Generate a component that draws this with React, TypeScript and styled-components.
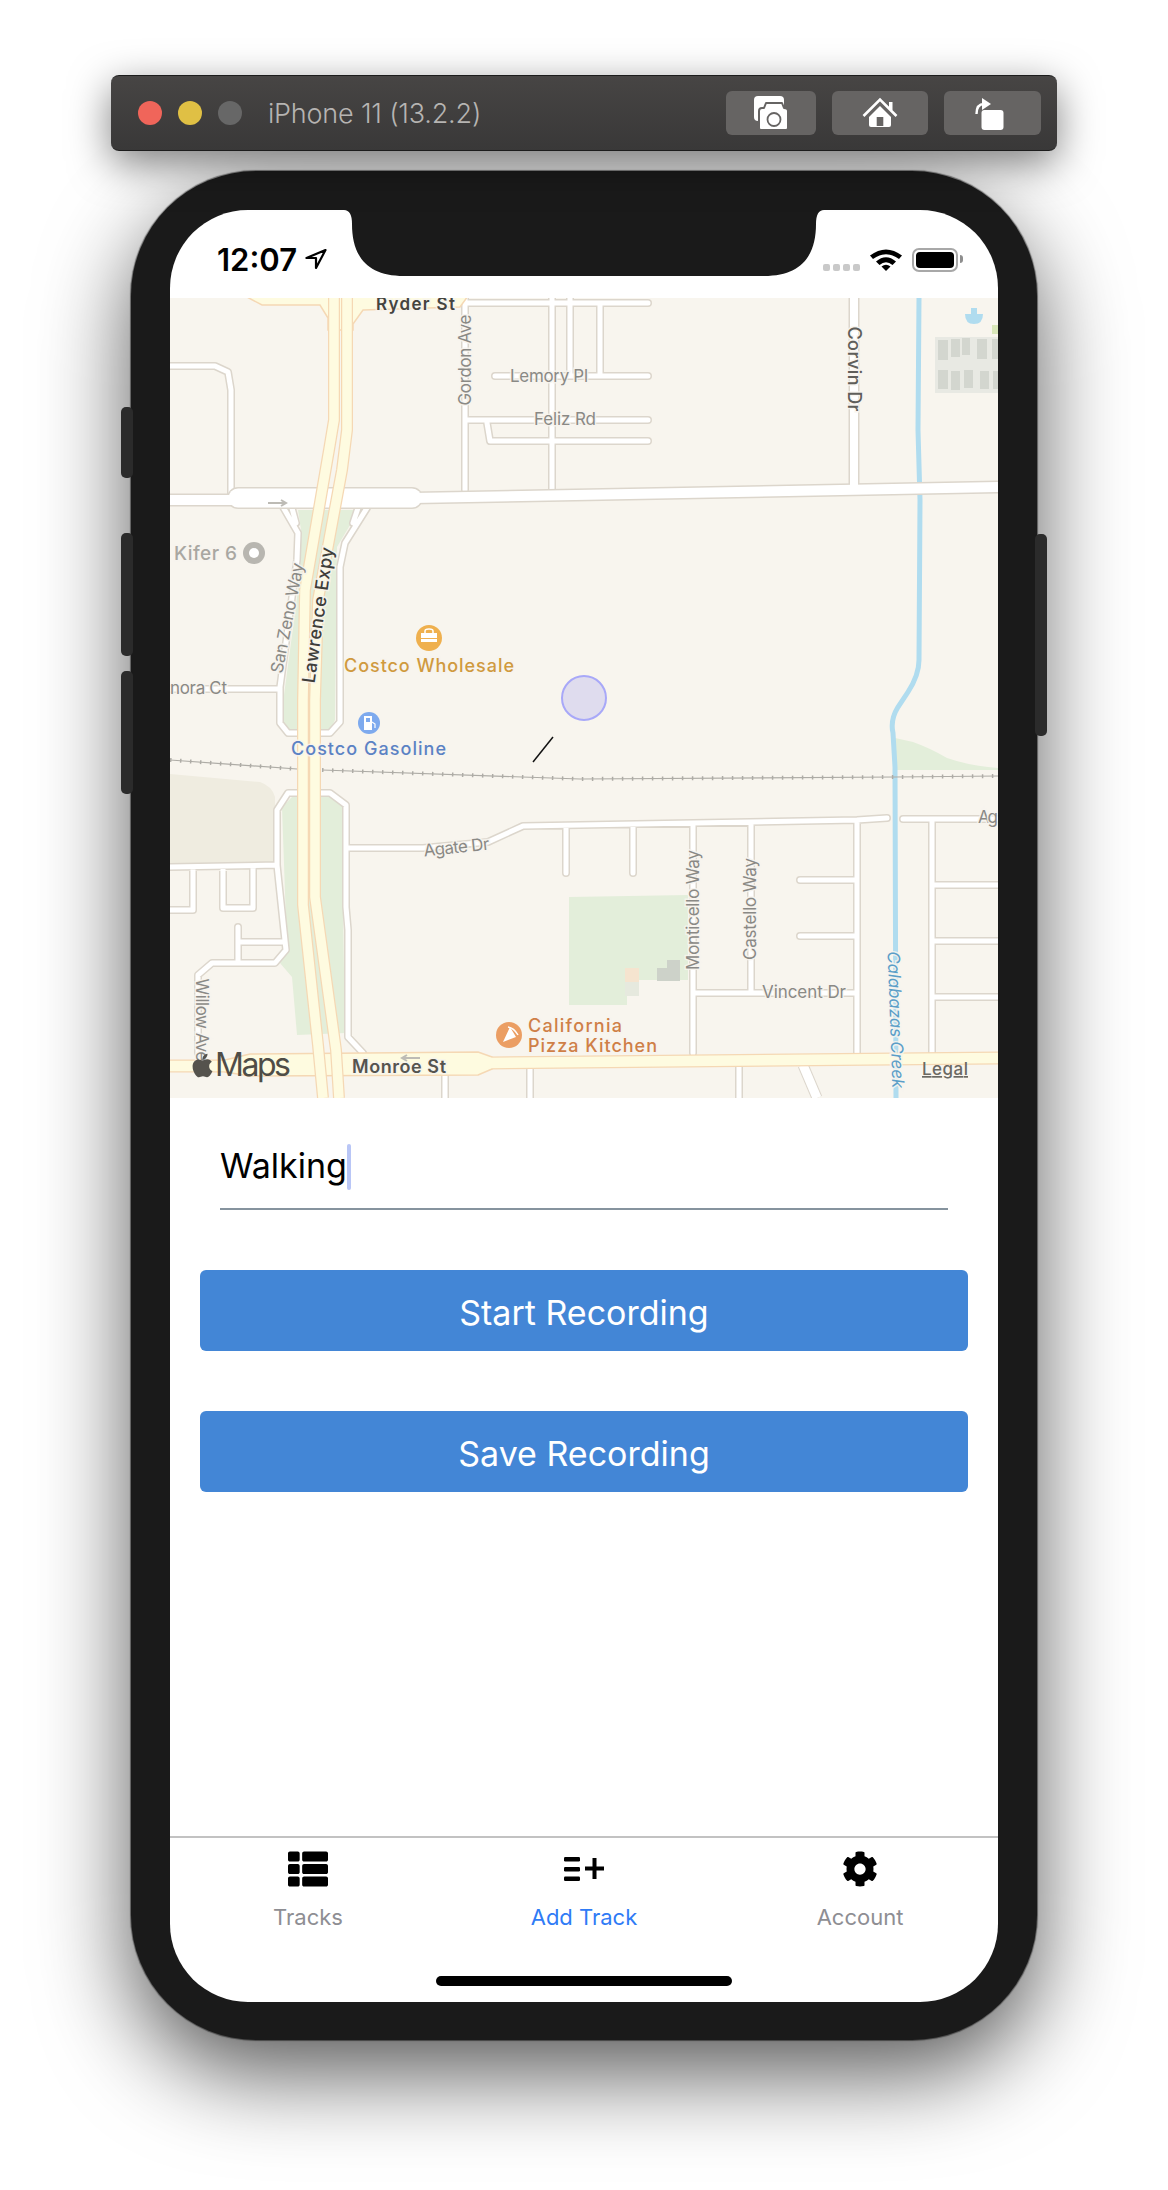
import React from 'react';
import styled, { createGlobalStyle } from 'styled-components';
import { FaApple, FaCog, FaThList } from 'react-icons/fa';

const GlobalStyle = createGlobalStyle`
  html, body {
    margin: 0;
    padding: 0;
    background: #fff;
  }
`;

const uiFont = `Inter, "Noto Sans", "Liberation Sans", sans-serif`;

const Page = styled.div`
  width: 1168px;
  height: 2190px;
  padding: 75px 0 0 111px;
  box-sizing: border-box;
  overflow: hidden;
  font-family: ${uiFont};
`;

const Toolbar = styled.header`
  width: 946px;
  height: 76px;
  box-sizing: border-box;
  padding: 0 16px 0 27px;
  display: flex;
  align-items: center;
  gap: 16px;
  border-radius: 8px;
  background: linear-gradient(#474544, #393838);
  border-top: 1px solid #1c1c1c;
  border-bottom: 1px solid #1c1c1c;
  box-shadow: 0 12px 40px rgba(0, 0, 0, 0.5);
  position: relative;
  z-index: 1;
`;

const Light = styled.span<{ $color: string }>`
  width: 24px;
  height: 24px;
  border-radius: 50%;
  background: ${(p) => p.$color};
`;

const DeviceName = styled.span`
  margin-left: 10px;
  flex: 1;
  font-size: 27px;
  font-weight: 300;
  letter-spacing: -0.2px;
  color: #b6b4b2;
`;

const ToolButton = styled.button<{ $width: number }>`
  width: ${(p) => p.$width}px;
  height: 44px;
  padding: 0;
  border: 0;
  border-radius: 6px;
  background: #666463;
  display: flex;
  align-items: center;
  justify-content: center;
`;

const Phone = styled.div`
  position: relative;
  width: 906px;
  height: 1869px;
  margin: 20px 0 0 20px;
  padding: 39px;
  box-sizing: border-box;
  border-radius: 125px;
  background: #1a1a1a;
  box-shadow: 0 34px 90px rgba(0, 0, 0, 0.65), 0 0 1px 1px #8a8a8a;
`;

const SideButton = styled.span<{ $side: 'left' | 'right'; $top: number; $height: number }>`
  position: absolute;
  ${(p) => p.$side}: -10px;
  top: ${(p) => p.$top}px;
  width: 12px;
  height: ${(p) => p.$height}px;
  border-radius: 5px;
  background: #2b2b2b;
`;

const Screen = styled.div`
  position: relative;
  width: 828px;
  height: 1792px;
  overflow: hidden;
  border-radius: 78px;
  background: #fff;
  display: flex;
  flex-direction: column;
`;

const Notch = styled.svg`
  position: absolute;
  top: 0;
  left: 174px;
`;

const StatusBar = styled.div`
  height: 88px;
  flex: none;
  box-sizing: border-box;
  padding: 34px 40px 0 47px;
  display: flex;
  justify-content: space-between;
`;

const StatusLeft = styled.div`
  display: flex;
  align-items: flex-start;
  gap: 8px;
`;

const Clock = styled.span`
  font-size: 31px;
  line-height: 32px;
  font-weight: 600;
  color: #000;
`;

const LocationArrow = styled.svg`
  margin-top: 5px;
`;

const StatusRight = styled.div`
  display: flex;
  align-items: flex-start;
  padding-top: 4px;
`;

const SignalDots = styled.div`
  display: flex;
  gap: 3px;
  margin: 16px 10px 0 0;
`;

const SignalDot = styled.span`
  width: 7px;
  height: 7px;
  border-radius: 2px;
  background: #c9c9c9;
`;

const Battery = styled.div`
  position: relative;
  width: 46px;
  height: 24px;
  margin-left: 10px;
  box-sizing: border-box;
  padding: 2px;
  border: 2px solid #a8a8a8;
  border-radius: 7px;
  &::before {
    content: '';
    display: block;
    width: 100%;
    height: 100%;
    border-radius: 4px;
    background: #000;
  }
  &::after {
    content: '';
    position: absolute;
    right: -7px;
    top: 5px;
    width: 3px;
    height: 8px;
    border-radius: 0 3px 3px 0;
    background: #8e8e8e;
  }
`;

const MapCanvas = styled.svg`
  display: block;
  flex: none;
  background: #f8f5ee;
`;

const MapLabel = styled.text<{ $tone: string; $weight?: number; $size?: number; $italic?: boolean }>`
  font-family: ${uiFont};
  font-size: ${(p) => p.$size || 17}px;
  font-weight: ${(p) => p.$weight || 400};
  font-style: ${(p) => (p.$italic ? 'italic' : 'normal')};
  fill: ${(p) => p.$tone};
  stroke: rgba(247, 244, 238, 0.85);
  stroke-width: 3px;
  paint-order: stroke;
`;

const MapsWord = styled.text`
  font-family: ${uiFont};
  font-size: 32px;
  font-weight: 400;
  letter-spacing: -1px;
  fill: #4f4d47;
`;

const LegalLink = styled.text`
  font-family: ${uiFont};
  font-size: 17px;
  font-weight: 500;
  fill: #6a6862;
  text-decoration: underline;
`;

const Form = styled.div`
  flex: 1;
  padding: 0 30px;
  display: flex;
  flex-direction: column;
`;

const NameField = styled.div`
  height: 112px;
  margin: 0 20px;
  box-sizing: border-box;
  padding-top: 46px;
  display: flex;
  align-items: flex-start;
  border-bottom: 2px solid #86939e;
`;

const NameValue = styled.span`
  font-size: 34px;
  line-height: 44px;
  color: #000;
`;

const Caret = styled.span`
  width: 4px;
  height: 46px;
  margin-top: 0;
  border-radius: 2px;
  background: #b9c6f6;
`;

const ActionButton = styled.button`
  height: 81px;
  margin-top: 60px;
  padding: 3px 0 0;
  border: 0;
  border-radius: 6px;
  background: #4386d6;
  color: #fff;
  font-family: ${uiFont};
  font-size: 34px;
  font-weight: 400;
`;

const TabBar = styled.nav`
  height: 166px;
  flex: none;
  box-sizing: border-box;
  border-top: 2px solid #c2c2c2;
  display: grid;
  grid-template-columns: repeat(3, 276px);
  position: relative;
`;

const TabItem = styled.div<{ $active?: boolean }>`
  display: flex;
  flex-direction: column;
  align-items: center;
  padding-top: 12px;
  color: ${(p) => (p.$active ? '#2f7bf6' : '#8e8e93')};
  font-size: 22px;
`;

const TabIcon = styled.div`
  height: 38px;
  display: flex;
  align-items: center;
  justify-content: center;
  color: #000;
`;

const TabLabel = styled.span`
  margin-top: 16px;
  line-height: 26px;
`;

const HomeBar = styled.span`
  position: absolute;
  left: 266px;
  top: 138px;
  width: 296px;
  height: 10px;
  border-radius: 5px;
  background: #000;
`;

const minorRoads = [
  'M170 366H215L228 372L231 390V497',
  'M465 298V490',
  'M552 298V490',
  'M570 298V376',
  'M600 304V376',
  'M465 303H648',
  'M495 376H648',
  'M465 420H648',
  'M487 423L490 441H648',
  'M283 507L298 533L297 560L280 687V723L288 733H330L340 722V567L345 543L367 508',
  'M292 508L296 523',
  'M358 508L353 523',
  'M170 689H280',
  'M277 865V810L288 793H330L346 805V907L348 930V1037L363 1053',
  'M277 865L286 950L275 963H212L198 975V1053',
  'M238 927V963',
  'M238 942H285',
  'M170 867L277 865',
  'M170 910H193V867',
  'M223 867V908H253V867',
  'M347 848H423L488 842L523 826L857 820L887 818',
  'M903 819H998',
  'M566 826V873',
  'M633 826V873',
  'M693 825V1053',
  'M751 824V992',
  'M693 993H857',
  'M857 820V1053',
  'M800 880H857',
  'M800 936H857',
  'M932 819V1053',
  'M932 885H998',
  'M932 941H998',
  'M932 997H998',
  'M445 1066V1098',
  'M530 1066V1098',
  'M739 1060V1098',
];

const labels = [
  { text: 'Ryder St', x: 376, y: 310, length: 79, tone: '#45443f', weight: 600, size: 17 },
  { text: 'Gordon Ave', x: 0, y: 0, length: 91, tone: '#8a8985', transform: 'translate(471 360) rotate(-90)' },
  { text: 'Lemory Pl', x: 510, y: 382, length: 78, tone: '#8a8985' },
  { text: 'Feliz Rd', x: 534, y: 425, length: 62, tone: '#8a8985' },
  { text: 'Corvin Dr', x: 0, y: 0, length: 85, tone: '#5f5e5a', weight: 500, size: 18, transform: 'translate(848 369) rotate(90)' },
  { text: 'Kifer 6', x: 174, y: 560, length: 63, tone: '#a9a7a1', weight: 500, size: 19 },
  { text: 'San Zeno Way', x: 0, y: 0, length: 112, tone: '#8a8985', transform: 'translate(293 619) rotate(-79)' },
  { text: 'Lawrence Expy', x: 0, y: 0, length: 137, tone: '#3f3e3a', weight: 500, size: 18, transform: 'translate(324 616) rotate(-82)' },
  { text: 'Costco Wholesale', x: 344, y: 672, length: 170, tone: '#d09a3e', weight: 500, size: 18 },
  { text: 'nora Ct', x: 170, y: 694, length: 57, tone: '#8a8985' },
  { text: 'Costco Gasoline', x: 291, y: 755, length: 155, tone: '#5b82c4', weight: 500, size: 18 },
  { text: 'Agate Dr', x: 0, y: 0, length: 66, tone: '#8a8985', transform: 'translate(457 853) rotate(-6)' },
  { text: 'Willow Ave', x: 0, y: 0, length: 83, tone: '#8a8985', transform: 'translate(196 1020) rotate(90)' },
  { text: 'Monroe St', x: 352, y: 1073, length: 94, tone: '#55544f', weight: 600, size: 18 },
  { text: 'California', x: 528, y: 1032, length: 94, tone: '#cf7f47', weight: 500, size: 18 },
  { text: 'Pizza Kitchen', x: 528, y: 1052, length: 129, tone: '#cf7f47', weight: 500, size: 18 },
  { text: 'Monticello Way', x: 0, y: 0, length: 120, tone: '#8a8985', transform: 'translate(699 910) rotate(-90)' },
  { text: 'Castello Way', x: 0, y: 0, length: 102, tone: '#8a8985', transform: 'translate(756 909) rotate(-90)' },
  { text: 'Vincent Dr', x: 762, y: 998, length: 84, tone: '#8a8985' },
  { text: 'Calabazas Creek', x: 0, y: 0, length: 137, tone: '#5a9ec8', italic: true, transform: 'translate(890 1020) rotate(88)' },
  { text: 'Ag', x: 978, y: 823, length: 20, tone: '#8a8985' },
];

const apartmentBlocks = [
  [938, 340, 10, 20], [951, 339, 9, 18], [962, 338, 8, 17], [977, 339, 10, 20], [992, 339, 6, 20],
  [938, 370, 10, 19], [951, 371, 9, 19], [964, 370, 9, 18], [980, 371, 9, 18], [993, 371, 5, 18],
];

const expressway = 'M334 298V420L329 450L305 590L303 700V905L318 1045L323 1098M347 298V430L342 470L318 600L315 700V897L336 1050L339 1098';
const monroeWide = 'M225 1060L250 1054L478 1052L492 1057V1069L478 1075L250 1076L225 1072Z';
const monroe = 'M170 1066H240M490 1063L998 1058';

const MapView: React.FC = () => (
  <MapCanvas width={828} height={800} viewBox="170 298 828 800">
    <path d="M170 774L260 782Q272 786 275 797V863H170Z" fill="#efece0" />
    <path d="M298 510H355L353 520L337 547L335 720L330 730H287L283 720L282 710L298 590L301 530Z" fill="#e3eeda" />
    <path d="M282 807L292 797H333L343 807V907L345 1033L297 1035L292 977L280 963L287 950Z" fill="#e3eeda" />
    <path d="M569 897L688 895V980H627V1005H569Z" fill="#e3eeda" />
    <path d="M625 968H639V982H625Z" fill="#f5e4cf" />
    <path d="M625 982H639V996H625Z" fill="#e6e9de" />
    <path d="M657 968H667V960H680V981H657Z" fill="#cdd2c9" />
    <path d="M895 738L913 742Q930 748 947 758Q970 766 998 768V770H896Z" fill="#e3eeda" />

    <path d="M935 337H998V393H935Z" fill="#e8e9e3" />
    {apartmentBlocks.map(([x, y, w, h]) => (
      <rect key={`${x}-${y}`} x={x} y={y} width={w} height={h} fill="#d3d6cf" />
    ))}
    <path d="M971 308H977V314H983Q983 324 974 324Q965 324 965 314H971Z" fill="#b0dcef" />
    <rect x={992} y={325} width={6} height={9} fill="#d8e6b8" />

    <path
      d="M919 298L918 430L920 500L919 660Q919 675 908 692L898 707Q890 720 893 733L895 767L896 1098"
      fill="none"
      stroke="#b0dcef"
      strokeWidth={5}
    />

    <g fill="none" stroke="#dcd6cc" strokeWidth={8} strokeLinecap="round" strokeLinejoin="round">
      <path d={minorRoads.join(' ')} />
      <path d="M803 1065L817 1098" strokeWidth={11} strokeLinecap="butt" />
    </g>
    <g fill="none" stroke="#fff" strokeWidth={5} strokeLinecap="round" strokeLinejoin="round">
      <path d={minorRoads.join(' ')} />
      <path d="M803 1065L817 1098" strokeWidth={9} strokeLinecap="butt" />
    </g>

    <g fill="none" stroke="#dcd6cc" strokeWidth={13}>
      <path d="M170 500H240M413 498L998 487" />
      <path d="M854 298V490" strokeWidth={11} />
    </g>
    <path d="M238 498H412" fill="none" stroke="#dcd6cc" strokeWidth={22} strokeLinecap="round" />
    <g fill="none" stroke="#fff" strokeWidth={10}>
      <path d="M170 500H240M413 498L998 487" />
      <path d="M854 298V490" strokeWidth={8} />
    </g>
    <path d="M238 498H412" fill="none" stroke="#fff" strokeWidth={19} strokeLinecap="round" />

    <g fill="none" stroke="#aeaca6">
      <path d="M170 760L297 769M322 770L580 779L895 777L998 776" strokeWidth={1.2} />
      <path d="M170 760L297 769M322 770L580 779L895 777L998 776" strokeWidth={4} strokeDasharray="1.5 8.5" />
    </g>

    <path d="M245 296L262 305H320L328 318V330H353V324L363 310L460 307L468 296Z" fill="#fefbe0" stroke="#f5d8b4" strokeWidth={1.5} />
    <g fill="none" strokeLinejoin="round">
      <path d={monroe} stroke="#f5d8b4" strokeWidth={13} />
      <path d={monroeWide} fill="#fefbe0" stroke="#f5d8b4" strokeWidth={1.5} />
      <path d={monroe} stroke="#fefbe0" strokeWidth={10.5} />
      <path d={expressway} stroke="#f5d8b4" strokeWidth={12} />
      <path d={expressway} stroke="#fefbe0" strokeWidth={9.5} />
    </g>

    <g fill="none" stroke="#bdbbb5" strokeWidth={2}>
      <path d="M268 503H286M281 500L286 503L281 506" />
      <path d="M420 1058H402M407 1055L402 1058L407 1061" />
    </g>

    <circle cx={254} cy={553} r={11} fill="#b8b6b0" />
    <circle cx={254} cy={553} r={5} fill="#fff" />

    <circle cx={429} cy={638} r={13} fill="#efb04e" />
    <path d="M421 633H437V642H421Z" fill="#fff" />
    <path d="M425 633V631Q425 629 429 629Q433 629 433 631V633" fill="none" stroke="#fff" strokeWidth={1.5} />
    <path d="M421 638.5H437" stroke="#efb04e" strokeWidth={1} />

    <circle cx={369} cy={723} r={11} fill="#7eaaee" />
    <path d="M364 716H372V730H364Z" fill="#fff" />
    <path d="M366 718H370V722H366Z" fill="#7eaaee" />
    <path d="M372 722L375 724V728" fill="none" stroke="#fff" strokeWidth={1.2} />

    <circle cx={509} cy={1035} r={13} fill="#eb9e63" />
    <path d="M503 1042L510 1027L516 1037Z" fill="#fff" />
    <path d="M508 1027Q514 1028 518 1035" fill="none" stroke="#fff" strokeWidth={1.5} />

    <circle cx={584} cy={698} r={22} fill="#dfdcee" stroke="#a8a8f8" strokeWidth={2} />
    <path d="M533 762L553 737" stroke="#111" strokeWidth={1.5} />

    {labels.map((l) => (
      <MapLabel
        key={l.text}
        x={l.x}
        y={l.y}
        transform={l.transform}
        textAnchor={l.transform ? 'middle' : 'start'}
        textLength={l.length}
        $tone={l.tone}
        $weight={l.weight}
        $size={l.size}
        $italic={l.italic}
      >
        {l.text}
      </MapLabel>
    ))}

    <FaApple x={189} y={1052} size={27} color="#55534d" />
    <MapsWord x={215} y={1076} textLength={75}>Maps</MapsWord>
    <LegalLink x={922} y={1075} textLength={46}>Legal</LegalLink>
  </MapCanvas>
);

const ScreenshotIcon = () => (
  <svg width="40" height="36" viewBox="0 0 40 36">
    <rect x="3" y="1" width="30" height="25" rx="4" fill="#fff" />
    <path
      d="M8 16Q8 13 11 13H13L15 8H31L33 13Q37 13 37 16V33Q37 35 35 35H10Q8 35 8 33Z"
      fill="#fff"
      stroke="#666463"
      strokeWidth="2"
      strokeLinejoin="round"
    />
    <circle cx="23" cy="24.5" r="6.5" fill="none" stroke="#666463" strokeWidth="1.8" />
  </svg>
);

const HomeIcon = () => (
  <svg width="36" height="36" viewBox="0 0 36 36">
    <path d="M1.5 21L18 4.5L34.5 21" fill="none" stroke="#fff" strokeWidth="2.6" />
    <rect x="27" y="7" width="3.5" height="8" fill="#fff" />
    <path d="M7 22L18 11L29 22V30Q29 32 27 32H9Q7 32 7 30Z" fill="#fff" />
    <rect x="14.7" y="22" width="6.6" height="9" fill="#666463" />
  </svg>
);

const RotateIcon = () => (
  <svg width="36" height="36" viewBox="0 0 36 36">
    <rect x="6.5" y="15" width="22" height="20" rx="3" fill="#fff" />
    <path d="M1.5 19Q1.5 9 9 9" fill="none" stroke="#fff" strokeWidth="2.4" />
    <path d="M7 3L16 9L7 15Z" fill="#fff" />
  </svg>
);

const AddTrackIcon = () => (
  <svg width="40" height="24" viewBox="0 0 40 24">
    <rect x="0" y="0" width="16" height="4.5" rx="1.2" />
    <rect x="0" y="10" width="16" height="4.5" rx="1.2" />
    <rect x="0" y="19.5" width="16" height="4.5" rx="1.2" />
    <rect x="21" y="9.5" width="19" height="4" />
    <rect x="28.5" y="1" width="4" height="21" />
  </svg>
);

const App: React.FC = () => (
  <Page>
    <GlobalStyle />
    <Toolbar>
      <Light $color="#f0655a" />
      <Light $color="#e0c044" />
      <Light $color="#676767" />
      <DeviceName>iPhone 11 (13.2.2)</DeviceName>
      <ToolButton $width={90}><ScreenshotIcon /></ToolButton>
      <ToolButton $width={96}><HomeIcon /></ToolButton>
      <ToolButton $width={97}><RotateIcon /></ToolButton>
    </Toolbar>
    <Phone>
      <SideButton $side="left" $top={236} $height={71} />
      <SideButton $side="left" $top={362} $height={123} />
      <SideButton $side="left" $top={500} $height={123} />
      <SideButton $side="right" $top={363} $height={202} />
      <Screen>
        <StatusBar>
          <StatusLeft>
            <Clock>12:07</Clock>
            <LocationArrow width="22" height="21" viewBox="0 0 22 21">
              <path d="M20.5 1L1.5 9H11V19Z" fill="none" stroke="#000" strokeWidth="2.2" strokeLinejoin="round" />
            </LocationArrow>
          </StatusLeft>
          <StatusRight>
            <SignalDots>
              <SignalDot />
              <SignalDot />
              <SignalDot />
              <SignalDot />
            </SignalDots>
            <svg width="32" height="23" viewBox="0 0 32 23">
              <path d="M0 7.5Q16 -4.5 32 7.5L29 11Q16 1.5 3 11Z" />
              <path d="M6 13.5Q16 5 26 13.5L22.5 17Q16 11.5 9.5 17Z" />
              <path d="M11.5 18.5Q16 15 20.5 18.5L16 23Z" />
            </svg>
            <Battery />
          </StatusRight>
        </StatusBar>
        <Notch width="480" height="66" viewBox="0 0 480 66">
          <path d="M0 0Q8 0 8 14C8 45 22 66 60 66H420C458 66 472 45 472 14Q472 0 480 0Z" fill="#1a1a1a" />
        </Notch>
        <MapView />
        <Form>
          <NameField>
            <NameValue>Walking</NameValue>
            <Caret />
          </NameField>
          <ActionButton>Start Recording</ActionButton>
          <ActionButton>Save Recording</ActionButton>
        </Form>
        <TabBar>
          <TabItem>
            <TabIcon><FaThList size={40} /></TabIcon>
            <TabLabel>Tracks</TabLabel>
          </TabItem>
          <TabItem $active>
            <TabIcon><AddTrackIcon /></TabIcon>
            <TabLabel>Add Track</TabLabel>
          </TabItem>
          <TabItem>
            <TabIcon><FaCog size={36} /></TabIcon>
            <TabLabel>Account</TabLabel>
          </TabItem>
          <HomeBar />
        </TabBar>
      </Screen>
    </Phone>
  </Page>
);

export default App;
